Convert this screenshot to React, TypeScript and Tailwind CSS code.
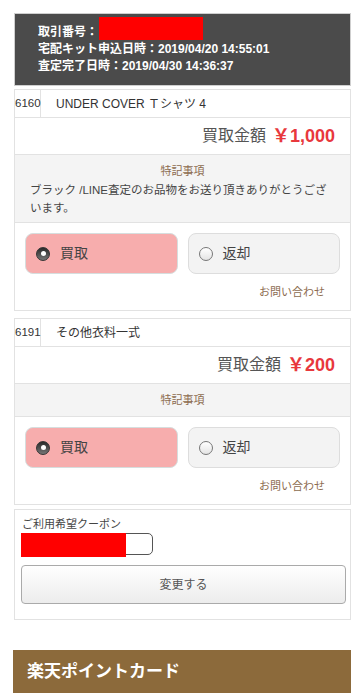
import React from "react";

const font = { fontFamily: '"Liberation Sans", "Noto Sans CJK JP", sans-serif' };

function Radio({ checked }: { checked: boolean }) {
  if (checked) {
    return (
      <span className="flex h-[14px] w-[14px] items-center justify-center rounded-full bg-gradient-to-b from-[#2a2a2a] to-[#777] border border-[#333]">
        <span className="h-[5px] w-[5px] rounded-full bg-white" />
      </span>
    );
  }
  return (
    <span className="h-[14px] w-[14px] rounded-full border border-[#777] bg-gradient-to-b from-[#fff] to-[#e4e4e4]" />
  );
}

function ItemCard({
  code,
  name,
  price,
  note,
}: {
  code: string;
  name: string;
  price: string;
  note?: string[];
}) {
  return (
    <div className="border border-[#e2e2e2] bg-white">
      <div className="flex h-[27px] items-stretch">
        <div className="flex w-[26px] items-center border-r border-[#e2e2e2] text-[11.5px] text-[#333]">{code}</div>
        <div className="flex items-center pl-[15px] text-[12px] text-[#333]">{name}</div>
      </div>
      <div className="flex h-[37px] items-center justify-end border-t border-[#e2e2e2] pr-[15px]">
        <span className="text-[16px] text-[#555]">買取金額</span>
        <span className="ml-[6px] text-[18px] font-bold text-[#e8383d]">￥{price}</span>
      </div>
      <div className="border-t border-[#e2e2e2] bg-[#f4f4f4] px-[15px]">
        <div className="flex h-[32px] items-center justify-center text-[11px] text-[#8c6b4f]">特記事項</div>
        {note && (
          <div className="-mt-[6px] pb-[5px] text-[11.5px] leading-[18px] text-[#444]">
            {note.map((n, i) => (
              <div key={i} className="whitespace-nowrap">{n}</div>
            ))}
          </div>
        )}
      </div>
      <div className="border-t border-[#e2e2e2] pl-[10px] pr-[10px] pt-[10px]">
        <div className="flex gap-[10px]">
          <div className="flex h-[41px] flex-1 items-center gap-[10px] rounded-[8px] border border-[#d6dede] bg-[#f7adad] pl-[10px]">
            <Radio checked />
            <span className="text-[14px] text-[#444]">買取</span>
          </div>
          <div className="flex h-[41px] flex-1 items-center gap-[10px] rounded-[8px] border border-[#dddddd] bg-[#f3f3f3] pl-[10px]">
            <Radio checked={false} />
            <span className="text-[14px] text-[#444]">返却</span>
          </div>
        </div>
        <div className="flex h-[36px] items-center justify-end pr-[15px] text-[11px] text-[#8c6b4f]">お問い合わせ</div>
      </div>
    </div>
  );
}

export default function App() {
  return (
    <div className="min-h-[693px] w-[363px] bg-white" style={font}>
      <div className="ml-[14px] w-[337px] pt-[13px]">
        <div className="h-[73px] border border-[#cfcfcf] bg-[#4b4b4b] pl-[23px] pt-[10px] text-[12px] font-bold leading-[17px] text-white">
          <div className="flex">
            取引番号：
            <span className="relative ml-[1px] inline-block w-[104px]">
              <span className="absolute left-0 top-[-7px] h-[23px] w-[104px] bg-[#ff0000]" />
            </span>
          </div>
          <div>宅配キット申込日時：2019/04/20 14:55:01</div>
          <div>査定完了日時：2019/04/30 14:36:37</div>
        </div>
        <div className="mt-[3px]">
          <ItemCard
            code="6160"
            name="UNDER COVER Ｔシャツ 4"
            price="1,000"
            note={["ブラック /LINE査定のお品物をお送り頂きありがとうござ", "います。"]}
          />
        </div>
        <div className="mt-[7px]">
          <ItemCard code="6191" name="その他衣料一式" price="200" />
        </div>
        <div className="mt-[4px] border border-[#e2e2e2] px-[6px] pb-[15px] pt-[6px]">
          <div className="pl-[1px] text-[11px] leading-[16px] text-[#444]">ご利用希望クーポン</div>
          <div className="relative mt-[1px] h-[22px] w-[132px] rounded-[5px] border border-[#555] bg-white">
            <span className="absolute -left-px -top-px h-[24px] w-[105px] bg-[#ff0000]" />
          </div>
          <button className="mt-[10px] flex h-[39px] w-[325px] items-center justify-center rounded-[4px] border border-[#aaa] bg-gradient-to-b from-[#ffffff] to-[#ececec] text-[12px] text-[#555]">
            変更する
          </button>
        </div>
      </div>
      <div className="ml-[13px] mt-[30px] flex h-[43px] w-[338px] items-center bg-[#8c6a3b] pl-[14px] text-[17px] font-bold text-white">
        楽天ポイントカード
      </div>
    </div>
  );
}
